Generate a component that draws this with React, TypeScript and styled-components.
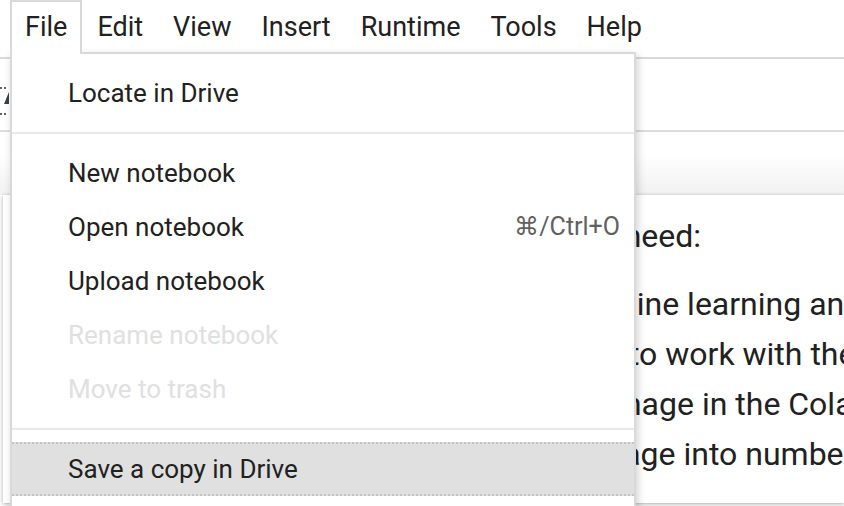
import React from 'react';
import styled, { createGlobalStyle } from 'styled-components';

const Global = createGlobalStyle`
  html, body { margin: 0; padding: 0; background: #fff; }
  body { font-family: Roboto, "Liberation Sans", Arial, sans-serif; color: #212121; }
  #root { width: 844px; height: 506px; overflow: hidden; }
`;

const Screen = styled.div`
  position: relative;
  width: 844px;
  height: 506px;
  overflow: hidden;
  background: #fff;
`;

const Header = styled.header`
  box-sizing: border-box;
  height: 59px;
  border-bottom: 2px solid #dadada;
  display: flex;
  align-items: flex-start;
  padding-left: 10px;
`;

const MenuButton = styled.div<{ $open?: boolean }>`
  position: relative;
  z-index: ${(p) => (p.$open ? 3 : 1)};
  box-sizing: border-box;
  height: 54px;
  padding: 0 13px 2px;
  border: 2px solid ${(p) => (p.$open ? '#d9d9d9' : 'transparent')};
  border-bottom: none;
  background: ${(p) => (p.$open ? '#fff' : 'transparent')};
  display: flex;
  align-items: center;
  font-size: 27px;
  line-height: 32px;
  color: #212121;
  white-space: nowrap;
`;

const Toolbar = styled.div`
  box-sizing: border-box;
  height: 73px;
  border-bottom: 2px solid #dcdcdc;
  padding-top: 27px;
  display: flex;
  align-items: flex-start;
`;

const Shade = styled.div`
  height: 63px;
  background: linear-gradient(#ffffff 0%, #ffffff 35%, #f1f1f1 100%);
`;

const Card = styled.section`
  box-sizing: border-box;
  margin-left: 3px;
  height: 308px;
  background: #fff;
  box-shadow: 0 1px 4px rgba(0, 0, 0, 0.35);
  padding: 16px 0 0 45px;
  font-size: 32px;
  line-height: 50px;
  color: #212121;
  white-space: nowrap;
`;

const Para = styled.p`
  margin: 0;
`;

const List = styled.ul`
  margin: 18px 0 0;
  padding-left: 40px;
`;

const Dropdown = styled.div`
  position: absolute;
  z-index: 2;
  left: 10px;
  top: 52px;
  width: 626px;
  height: 470px;
  box-sizing: border-box;
  background: #fff;
  border: 2px solid #d9d9d9;
  box-shadow: 2px 3px 8px rgba(0, 0, 0, 0.18);
  padding-top: 12px;
`;

const Item = styled.div<{ $disabled?: boolean; $active?: boolean }>`
  box-sizing: border-box;
  height: 54px;
  display: flex;
  align-items: center;
  justify-content: space-between;
  padding: 0 14px 0 56px;
  font-size: 26px;
  line-height: 30px;
  color: ${(p) => (p.$disabled ? '#e0e0e0' : '#212121')};
  background: ${(p) => (p.$active ? '#e0e0e0' : 'transparent')};
  border-top: 2px dotted ${(p) => (p.$active ? '#c4c4c4' : 'transparent')};
  border-bottom: 2px dotted ${(p) => (p.$active ? '#c4c4c4' : 'transparent')};
  white-space: nowrap;
`;

const Shortcut = styled.span`
  font-size: 25px;
  color: #616161;
`;

const Separator = styled.div`
  height: 2px;
  margin: 12px 0;
  background: #e8e8e8;
`;

const ToolIcon = () => (
  <svg width="10" height="30" viewBox="0 0 10 30">
    <g fill="#5f6368">
      <rect x="0" y="1" width="2" height="2" />
      <rect x="4" y="1" width="2" height="2" />
      <rect x="0" y="27" width="2" height="2" />
      <rect x="4" y="27" width="2" height="2" />
    </g>
    <path d="M4 18 L9 6 L9 18 Z" fill="#3c4043" />
  </svg>
);

const menus = ['File', 'Edit', 'View', 'Insert', 'Runtime', 'Tools', 'Help'];

export default function App() {
  return (
    <>
      <Global />
      <Screen>
        <Header>
          {menus.map((m, i) => (
            <MenuButton key={m} $open={i === 0}>
              {m}
            </MenuButton>
          ))}
        </Header>
        <Toolbar>
          <ToolIcon />
        </Toolbar>
        <Shade />
        <Card>
          <Para>To follow along in this notebook you will need:</Para>
          <List>
            <li>A solid understanding of Python, machine learning and TensorFlow</li>
            <li>A Web browser and a Google account to work with the notebook</li>
            <li>A photo of your own or try the demo image in the Colab files</li>
            <li>A few lines of code to convert your image into numbers</li>
          </List>
        </Card>
        <Dropdown>
          <Item>Locate in Drive</Item>
          <Separator />
          <Item>New notebook</Item>
          <Item>
            Open notebook
            <Shortcut>⌘/Ctrl+O</Shortcut>
          </Item>
          <Item>Upload notebook</Item>
          <Item $disabled>Rename notebook</Item>
          <Item $disabled>Move to trash</Item>
          <Separator />
          <Item $active>Save a copy in Drive</Item>
        </Dropdown>
      </Screen>
    </>
  );
}
